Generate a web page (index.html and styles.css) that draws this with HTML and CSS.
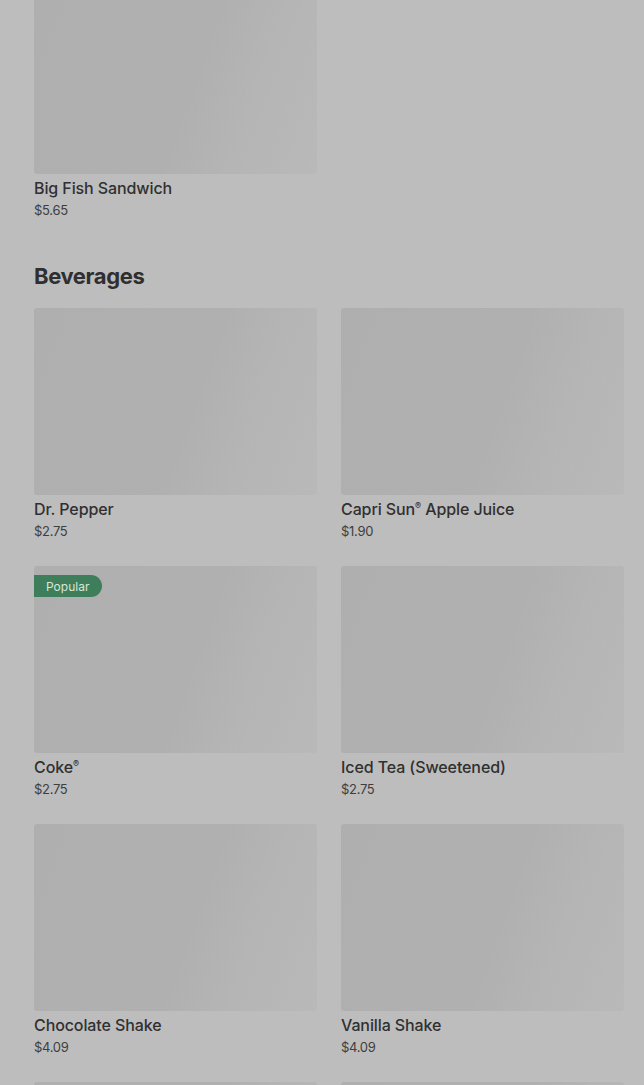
FILE: index.html
```html
<!DOCTYPE html>
<html lang="en">
<head>
<meta charset="utf-8">
<title>Menu</title>
<link rel="stylesheet" href="styles.css">
</head>
<body>
<main class="menu">
  <section class="section section--first">
    <div class="grid">
      <article class="item">
        <div class="thumb"></div>
        <h3 class="name">Big Fish Sandwich</h3>
        <p class="price">$5.65</p>
      </article>
    </div>
  </section>

  <section class="section">
    <h2 class="heading">Beverages</h2>
    <div class="grid">
      <article class="item">
        <div class="thumb"></div>
        <h3 class="name">Dr. Pepper</h3>
        <p class="price">$2.75</p>
      </article>
      <article class="item">
        <div class="thumb"></div>
        <h3 class="name">Capri Sun<sup>®</sup> Apple Juice</h3>
        <p class="price">$1.90</p>
      </article>
      <article class="item">
        <div class="thumb"><span class="badge">Popular</span></div>
        <h3 class="name">Coke<sup>®</sup></h3>
        <p class="price">$2.75</p>
      </article>
      <article class="item">
        <div class="thumb"></div>
        <h3 class="name">Iced Tea (Sweetened)</h3>
        <p class="price">$2.75</p>
      </article>
      <article class="item">
        <div class="thumb"></div>
        <h3 class="name">Chocolate Shake</h3>
        <p class="price">$4.09</p>
      </article>
      <article class="item">
        <div class="thumb"></div>
        <h3 class="name">Vanilla Shake</h3>
        <p class="price">$4.09</p>
      </article>
      <article class="item">
        <div class="thumb"></div>
      </article>
      <article class="item">
        <div class="thumb"></div>
      </article>
    </div>
  </section>
</main>
</body>
</html>
```

FILE: styles.css
```css
html, body {
  margin: 0;
  padding: 0;
}
body {
  background: #bdbdbd;
  font-family: Inter, "Noto Sans", "Liberation Sans", sans-serif;
  color: #2f2f2f;
  overflow: hidden;
  height: 1085px;
}
.menu {
  padding: 0 20px 0 34px;
  display: flex;
  flex-direction: column;
  gap: 39px;
}
.section--first {
  margin-top: -13px;
}
.heading {
  margin: 0 0 16px;
  font-size: 22px;
  line-height: 32px;
  font-weight: 700;
  letter-spacing: -0.4px;
  color: #2f2f2f;
}
.grid {
  display: grid;
  grid-template-columns: 283px 283px;
  column-gap: 24px;
  row-gap: 24px;
}
.item {
  display: flex;
  flex-direction: column;
}
.thumb {
  position: relative;
  height: 187px;
  border-radius: 3px;
  background: linear-gradient(110deg, #afafaf 0%, #b0b0b0 55%, #b5b5b5 75%, #b9b9b9 100%);
}
.name {
  margin: 3px 0 0;
  font-size: 16px;
  line-height: 22px;
  font-weight: 500;
  color: #303030;
  letter-spacing: -0.1px;
}
.name sup {
  font-size: 9px;
  line-height: 0;
  vertical-align: 6px;
}
.price {
  margin: 1px 0 0;
  font-size: 13px;
  line-height: 21px;
  color: #3e3e3e;
  letter-spacing: -0.3px;
}
.badge {
  position: absolute;
  top: 9px;
  left: 0;
  height: 22px;
  padding: 0 13px 0 12px;
  display: flex;
  align-items: center;
  background: #3f7e5b;
  color: #d6e6dc;
  font-size: 12px;
  border-radius: 0 11px 11px 0;
}
```
